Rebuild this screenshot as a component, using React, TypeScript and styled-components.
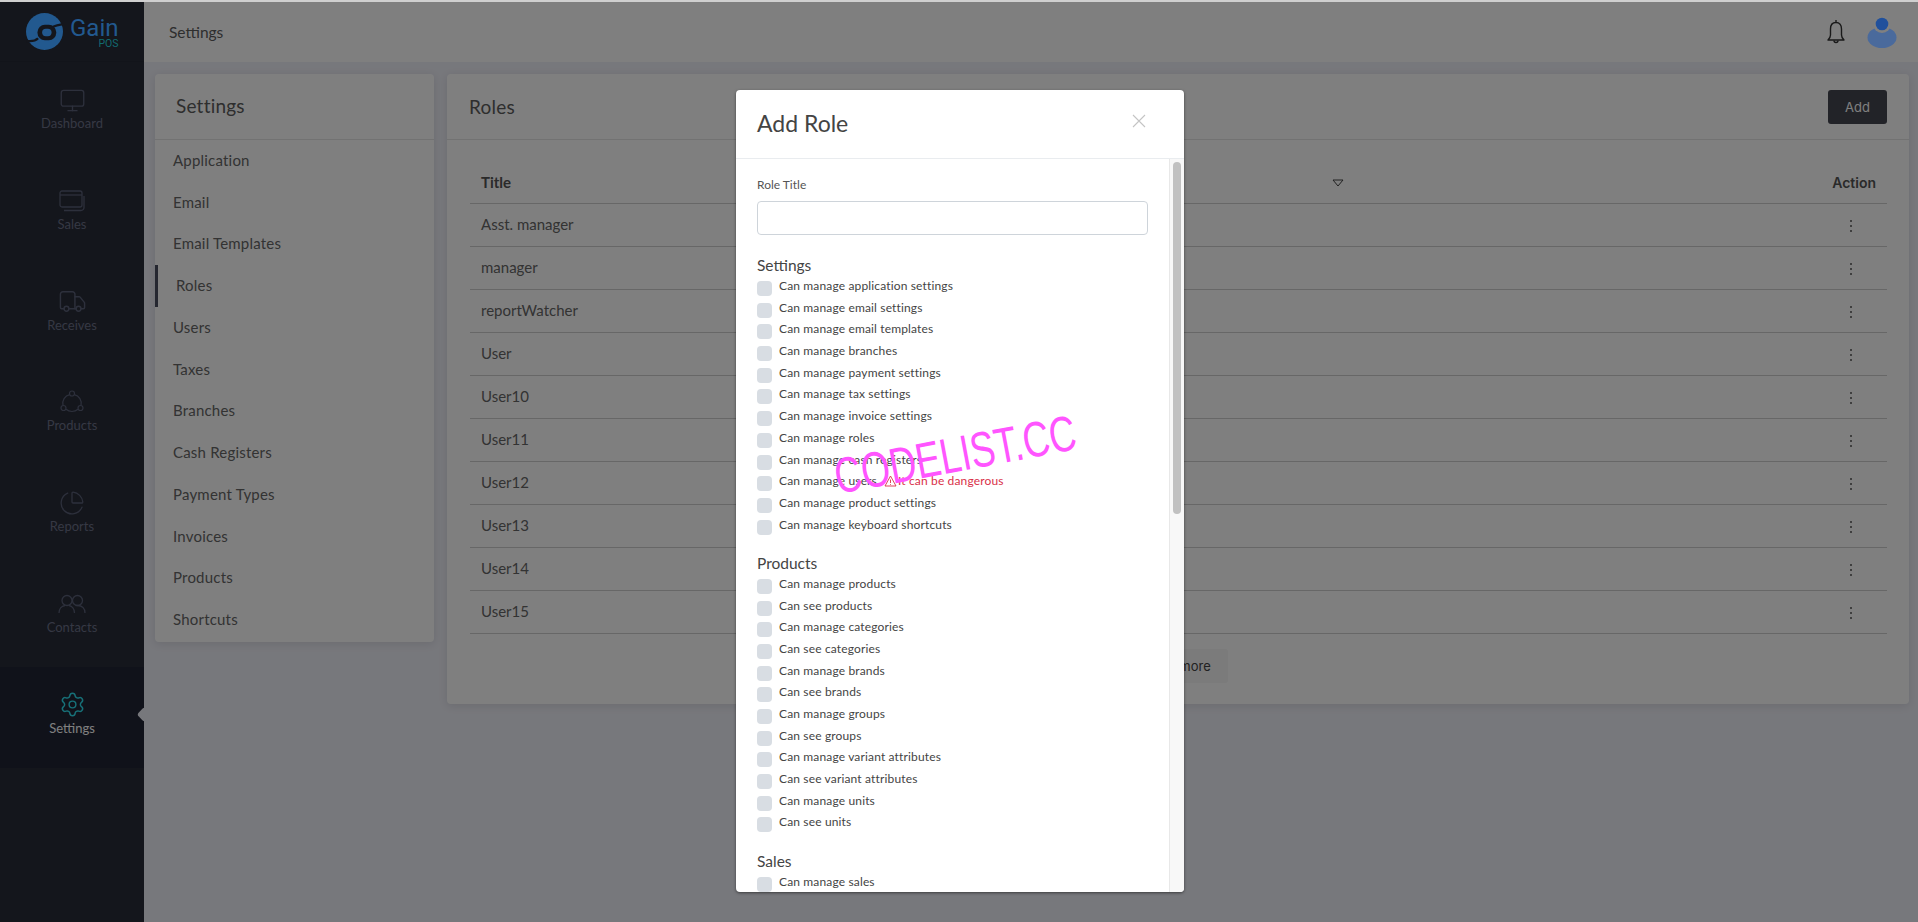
import React from 'react'
import styled, { createGlobalStyle } from 'styled-components'
import { ChartPie, Monitor, Settings as Gear, Truck } from 'lucide-react'

const GlobalStyle = createGlobalStyle`
    html, body {
        margin: 0;
        padding: 0;
        height: 100%;
        overflow: hidden;
        background: #cfcfcf;
        font-family: 'Lato', 'Open Sans', sans-serif;
    }
    * {
        box-sizing: border-box;
    }
`

const SalesIcon = () => (
    <svg width="26" height="22" viewBox="0 0 26 22" fill="none" stroke="currentColor" strokeWidth="1.3">
        <rect x="1" y="1" width="22" height="16" rx="2" />
        <path d="M1 5h22" />
        <path d="M5 20.5h17a3 3 0 0 0 3-3V6" />
    </svg>
)

const ProductsIcon = () => (
    <svg width="24" height="24" viewBox="0 0 24 24" fill="none" stroke="currentColor" strokeWidth="1.2">
        <circle cx="12" cy="3.5" r="2.5" />
        <circle cx="3.5" cy="18" r="2.5" />
        <circle cx="20.5" cy="18" r="2.5" />
        <path d="M9.7 4.6A9 9 0 0 0 3 15.5M14.3 4.6A9 9 0 0 1 21 15.5M6 19.2a9 9 0 0 0 12 0" />
    </svg>
)

const ContactsIcon = () => (
    <svg width="28" height="20" viewBox="0 0 28 20" fill="none" stroke="currentColor" strokeWidth="1.3">
        <circle cx="9" cy="6.5" r="5" />
        <circle cx="19.5" cy="6.5" r="5" />
        <path d="M1 19c0-4 2.500-7 6-7.500M11 11.500c3 .5 5.500 3.500 5.500 7.500M17.500 11.700c.6-.2 1.300-.2 2-.2 4.500 0 7.500 3 7.500 7.500" />
    </svg>
)

const BellIcon = () => (
    <svg width="18" height="26" viewBox="0 0 18 26" fill="none" stroke="#333333" strokeWidth="1.400" strokeLinejoin="round">
        <path d="M9 1v2.500M9 3.500c-3.500 0-5.500 2.500-5.500 6.500v6c0 2-1 3.500-2.500 5h16c-1.500-1.500-2.500-3-2.500-5v-6c0-4-2-6.500-5.500-6.500z" />
        <path d="M7 21.500a2 2 0 0 0 4 0" />
    </svg>
)

const AvatarIcon = () => (
    <svg width="30" height="31" viewBox="0 0 30 31">
        <ellipse cx="15" cy="20.500" rx="14.500" ry="10.500" fill="#4a6a9c" />
        <circle cx="15" cy="7" r="9" fill="#808080" />
        <circle cx="15" cy="7" r="6.300" fill="#20509c" />
    </svg>
)

const LogoMark = () => (
    <svg width="37" height="37" viewBox="20 25 110 110" fill="none">
        <circle cx="75" cy="80" r="55" fill="#22598f" />
        <path d="M100 66C110 62 120 60 130 58" stroke="#14161c" strokeWidth="6" />
        <rect x="54" y="60" width="56" height="46" rx="22" fill="#14161c" />
        <rect x="68" y="72" width="28" height="22" rx="11" fill="#22598f" />
        <path d="M56 100C48 108 36 110 22 108" stroke="#14161c" strokeWidth="7" />
    </svg>
)

const navItems = [
    { label: 'Dashboard', icon: <Monitor size={27} strokeWidth={1.2} /> },
    { label: 'Sales', icon: <SalesIcon /> },
    { label: 'Receives', icon: <Truck size={29} strokeWidth={1.2} /> },
    { label: 'Products', icon: <ProductsIcon /> },
    { label: 'Reports', icon: <ChartPie size={26} strokeWidth={1.2} /> },
    { label: 'Contacts', icon: <ContactsIcon /> },
    { label: 'Settings', icon: <Gear size={27} strokeWidth={1.3} />, active: true },
]

const settingsLinks = [
    'Application',
    'Email',
    'Email Templates',
    'Roles',
    'Users',
    'Taxes',
    'Branches',
    'Cash Registers',
    'Payment Types',
    'Invoices',
    'Products',
    'Shortcuts',
]

const roles = [
    'Asst. manager',
    'manager',
    'reportWatcher',
    'User',
    'User10',
    'User11',
    'User12',
    'User13',
    'User14',
    'User15',
]

const permissions = [
    {
        title: 'Settings',
        items: [
            'Can manage application settings',
            'Can manage email settings',
            'Can manage email templates',
            'Can manage branches',
            'Can manage payment settings',
            'Can manage tax settings',
            'Can manage invoice settings',
            'Can manage roles',
            'Can manage cash registers',
            'Can manage users',
            'Can manage product settings',
            'Can manage keyboard shortcuts',
        ],
    },
    {
        title: 'Products',
        items: [
            'Can manage products',
            'Can see products',
            'Can manage categories',
            'Can see categories',
            'Can manage brands',
            'Can see brands',
            'Can manage groups',
            'Can see groups',
            'Can manage variant attributes',
            'Can see variant attributes',
            'Can manage units',
            'Can see units',
        ],
    },
    {
        title: 'Sales',
        items: ['Can manage sales'],
    },
]

const App = () => {
    return (
        <Page>
            <GlobalStyle />
            <Sidebar>
                <Brand>
                    <BrandMark>
                        <LogoMark />
                    </BrandMark>
                    <BrandText>
                        <BrandName>Gain</BrandName>
                        <BrandSub>POS</BrandSub>
                    </BrandText>
                </Brand>
                {navItems.map((item) => (
                    <NavItem key={item.label} $active={item.active}>
                        <NavIcon $active={item.active}>{item.icon}</NavIcon>
                        <NavLabel $active={item.active}>{item.label}</NavLabel>
                        {item.active && <NavNotch />}
                    </NavItem>
                ))}
            </Sidebar>
            <Main>
                <Header>
                    <HeaderTitle>Settings</HeaderTitle>
                    <HeaderIcons>
                        <BellIcon />
                        <AvatarWrap>
                            <AvatarIcon />
                        </AvatarWrap>
                    </HeaderIcons>
                </Header>
                <Content>
                    <SideCard>
                        <CardHead>
                            <CardTitle>Settings</CardTitle>
                        </CardHead>
                        {settingsLinks.map((link) => (
                            <SideLink key={link} $active={link === 'Roles'}>
                                {link}
                            </SideLink>
                        ))}
                    </SideCard>
                    <RolesCard>
                        <RolesHead>
                            <CardTitle>Roles</CardTitle>
                            <AddButton>Add</AddButton>
                        </RolesHead>
                        <TableWrap>
                            <HeadRow>
                                <TitleHead>Title</TitleHead>
                                <SortMark viewBox="0 0 12 8" fill="none" stroke="#444" strokeWidth="1">
                                    <path d="M1 1h10L6 7z" />
                                </SortMark>
                                <ActionHead>Action</ActionHead>
                            </HeadRow>
                            {roles.map((role) => (
                                <RoleRow key={role}>
                                    <span>{role}</span>
                                    <Kebab>
                                        <i />
                                        <i />
                                        <i />
                                    </Kebab>
                                </RoleRow>
                            ))}
                        </TableWrap>
                        <LoadWrap>
                            <LoadMore>Load more</LoadMore>
                        </LoadWrap>
                    </RolesCard>
                </Content>
            </Main>
            <Backdrop>
                <Modal>
                    <ModalHead>
                        <ModalTitle>Add Role</ModalTitle>
                        <CloseMark viewBox="0 0 14 14" stroke="#c4c4c4" strokeWidth="1.100">
                            <path d="M1 1l12 12M13 1L1 13" />
                        </CloseMark>
                    </ModalHead>
                    <ModalBody>
                        <ModalForm>
                            <FieldLabel>Role Title</FieldLabel>
                            <TextField />
                            {permissions.map((group) => (
                                <Group key={group.title}>
                                    <GroupTitle>{group.title}</GroupTitle>
                                    {group.items.map((item) => (
                                        <PermRow key={item}>
                                            <PermBox />
                                            <PermLabel>{item}</PermLabel>
                                            {item === 'Can manage users' && (
                                                <Danger>
                                                    <svg width="13" height="12" viewBox="0 0 13 12" fill="none" stroke="#d92f48" strokeWidth="0.900">
                                                        <path d="M6.500 1L12 11H1zM6.500 4.500v3.500M6.500 9v.8" />
                                                    </svg>
                                                    It can be dangerous
                                                </Danger>
                                            )}
                                        </PermRow>
                                    ))}
                                </Group>
                            ))}
                        </ModalForm>
                        <ScrollRail>
                            <ScrollThumb />
                        </ScrollRail>
                    </ModalBody>
                </Modal>
            </Backdrop>
            <Watermark>CODELIST.CC</Watermark>
        </Page>
    )
}

export default App

const Page = styled.div`
    display: flex;
    width: 1918px;
    height: 922px;
    padding-top: 2px;
    overflow: hidden;
    position: relative;
`

const Sidebar = styled.aside`
    width: 144px;
    flex-shrink: 0;
    background: #282c38;
`

const Brand = styled.div`
    height: 60px;
    display: flex;
    align-items: center;
    gap: 7px;
    padding-left: 26px;
    border-bottom: 1px solid #252934;
`

const BrandMark = styled.div`
    position: relative;
    z-index: 2;
    display: flex;
`

const BrandText = styled.div`
    position: relative;
    z-index: 2;
    display: flex;
    flex-direction: column;
    font-family: 'Roboto', sans-serif;
    margin-top: 3px;
`

const BrandName = styled.span`
    font-size: 24px;
    line-height: 22px;
    color: #22598f;
`

const BrandSub = styled.span`
    font-size: 10.500px;
    line-height: 10px;
    color: #126a70;
    text-align: right;
`

const NavItem = styled.div<{ $active?: boolean }>`
    height: 100.800px;
    display: flex;
    flex-direction: column;
    align-items: center;
    padding-top: 23px;
    position: relative;
    background: ${(props) => (props.$active ? '#202434' : 'transparent')};
`

const NavIcon = styled.div<{ $active?: boolean }>`
    height: 30px;
    display: flex;
    align-items: center;
    justify-content: center;
    color: ${(props) => (props.$active ? '#2ee0f0' : '#5a6078')};
`

const NavLabel = styled.span<{ $active?: boolean }>`
    font-size: 13px;
    line-height: 18px;
    margin-top: -1px;
    color: ${(props) => (props.$active ? '#ffffff' : '#6c7188')};
`

const NavNotch = styled.span`
    position: absolute;
    right: -5.500px;
    top: 42.500px;
    width: 11px;
    height: 11px;
    background: #eff0f8;
    border-radius: 3px;
    transform: rotate(45deg);
`

const Main = styled.main`
    flex: 1;
    min-width: 0;
    display: flex;
    flex-direction: column;
    background: #eff0f8;
`

const Header = styled.header`
    height: 60px;
    flex-shrink: 0;
    background: #ffffff;
    display: flex;
    align-items: center;
    justify-content: space-between;
    padding: 0 21px 0 25px;
`

const HeaderTitle = styled.span`
    font-size: 15.500px;
    color: #5c5c5c;
`

const HeaderIcons = styled.div`
    display: flex;
    align-items: center;
    gap: 22px;
`

const AvatarWrap = styled.div`
    position: relative;
    z-index: 2;
    display: flex;
`

const Content = styled.div`
    display: flex;
    align-items: flex-start;
    gap: 13px;
    padding: 12px 9px 0 11px;
`

const Card = styled.section`
    background: #ffffff;
    border-radius: 4px;
    box-shadow: 0 2px 8px rgba(40, 44, 60, 0.12);
`

const SideCard = styled(Card)`
    width: 279px;
    flex-shrink: 0;
    height: 568px;
`

const RolesCard = styled(Card)`
    flex: 1;
    min-width: 0;
    height: 630px;
`

const CardHead = styled.div`
    height: 66px;
    display: flex;
    align-items: center;
    padding: 0 21px 2px;
    border-bottom: 1px solid #e4e4e4;
`

const RolesHead = styled(CardHead)`
    justify-content: space-between;
    padding: 0 22px;
`

const CardTitle = styled.h2`
    margin: 0;
    font-size: 19px;
    font-weight: 400;
    letter-spacing: 0.2px;
    color: #5c5c5c;
`

const SideLink = styled.div<{ $active?: boolean }>`
    height: 41.750px;
    display: flex;
    align-items: center;
    font-size: 15px;
    letter-spacing: 0.2px;
    color: #666666;
    padding: 0 0 2px 18px;
    border-left: ${(props) => (props.$active ? '3px solid #4a4e60' : '0')};
`

const AddButton = styled.button`
    width: 59px;
    height: 34px;
    border: 0;
    border-radius: 3px;
    background: #444650;
    color: #ffffff;
    font-family: 'Inter', sans-serif;
    font-size: 13px;
`

const TableWrap = styled.div`
    margin: 23px 22px 0 23px;
`

const HeadRow = styled.div`
    height: 41px;
    display: flex;
    align-items: center;
    padding: 0 11px 2px;
    position: relative;
    border-bottom: 1px solid #cfcfcf;
    color: #555555;
    font-size: 14px;
`

const TitleHead = styled.strong`
    font-weight: 700;
    font-size: 15px;
`

const SortMark = styled.svg`
    position: absolute;
    left: 862px;
    top: 16px;
    width: 12px;
    height: 8px;
`

const ActionHead = styled.strong`
    margin-left: auto;
    font-family: 'Inter', sans-serif;
    font-weight: 600;
    font-size: 14px;
`

const RoleRow = styled.div`
    height: 43px;
    display: flex;
    align-items: center;
    justify-content: space-between;
    padding: 0 35px 2px 11px;
    border-bottom: 1px solid #cfcfcf;
    color: #666666;
    font-size: 15px;
`

const Kebab = styled.div`
    display: flex;
    flex-direction: column;
    gap: 3px;
    margin-top: 4px;

    > i {
        width: 2px;
        height: 2px;
        border-radius: 50%;
        background: #555555;
    }
`

const LoadWrap = styled.div`
    display: flex;
    justify-content: center;
    margin-top: 15px;
`

const LoadMore = styled.button`
    width: 99px;
    height: 34px;
    border: 0;
    border-radius: 3px;
    background: #f6f6f6;
    color: #444444;
    font-family: 'Inter', sans-serif;
    font-size: 13px;
`

const Backdrop = styled.div`
    position: absolute;
    z-index: 1;
    inset: 2px 0 0 0;
    background: rgba(0, 0, 0, 0.5);
    display: flex;
    justify-content: center;
    padding: 88px 0 0 2px;
`

const Modal = styled.div`
    width: 448px;
    height: 802px;
    background: #ffffff;
    border-radius: 4px;
    overflow: hidden;
    display: flex;
    flex-direction: column;
    box-shadow: 0 1px 3px rgba(0, 0, 0, 0.5);
`

const ModalHead = styled.div`
    height: 69px;
    flex-shrink: 0;
    display: flex;
    align-items: center;
    justify-content: space-between;
    padding: 0 38px 2px 21px;
    border-bottom: 1px solid #e9ecef;
`

const ModalTitle = styled.h3`
    margin: 0;
    font-size: 23px;
    font-weight: 400;
    color: #444444;
`

const CloseMark = styled.svg`
    width: 14px;
    height: 14px;
    margin-top: -4px;
`

const ModalBody = styled.div`
    flex: 1;
    min-height: 0;
    display: flex;
`

const ModalForm = styled.form`
    flex: 1;
    min-width: 0;
    overflow: hidden;
    padding: 17px 21px 0;
`

const ScrollRail = styled.div`
    width: 15px;
    flex-shrink: 0;
    padding: 3px 3px 0;
    background: #f8f8f8;
    border-left: 1px solid #e8e8e8;
`

const ScrollThumb = styled.div`
    width: 8px;
    height: 352px;
    border-radius: 4px;
    background: #c1c1c1;
`

const FieldLabel = styled.label`
    display: block;
    font-size: 12px;
    line-height: 18px;
    margin-bottom: 7px;
    color: #555555;
`

const TextField = styled.input`
    display: block;
    width: 391px;
    height: 34px;
    border: 1px solid #ced4da;
    border-radius: 4px;
    margin-bottom: 19px;
    outline: none;
`

const Group = styled.div`
    margin-bottom: 13.600px;
`

const GroupTitle = styled.div`
    height: 24px;
    line-height: 23px;
    font-size: 15.500px;
    color: #444444;
`

const PermRow = styled.div`
    height: 21.700px;
    display: flex;
    align-items: flex-start;
`

const PermBox = styled.span`
    width: 15px;
    height: 15px;
    margin-top: 3px;
    margin-right: 7px;
    flex-shrink: 0;
    border-radius: 4px;
    background: #d8dde3;
`

const PermLabel = styled.span`
    font-size: 12px;
    line-height: 16px;
    letter-spacing: 0.15px;
    color: #444444;
`

const Danger = styled.span`
    display: inline-flex;
    align-items: center;
    gap: 1px;
    margin-left: 7px;
    font-size: 12px;
    line-height: 16px;
    letter-spacing: 0.15px;
    color: #d92f48;
`

const Watermark = styled.div`
    position: absolute;
    z-index: 3;
    left: 833px;
    top: 435px;
    width: 250px;
    font-family: 'Liberation Sans', sans-serif;
    font-size: 37px;
    line-height: 40px;
    white-space: nowrap;
    color: #ff55ff;
    transform: rotate(-10.600deg) scaleY(1.350);
    pointer-events: none;
`
